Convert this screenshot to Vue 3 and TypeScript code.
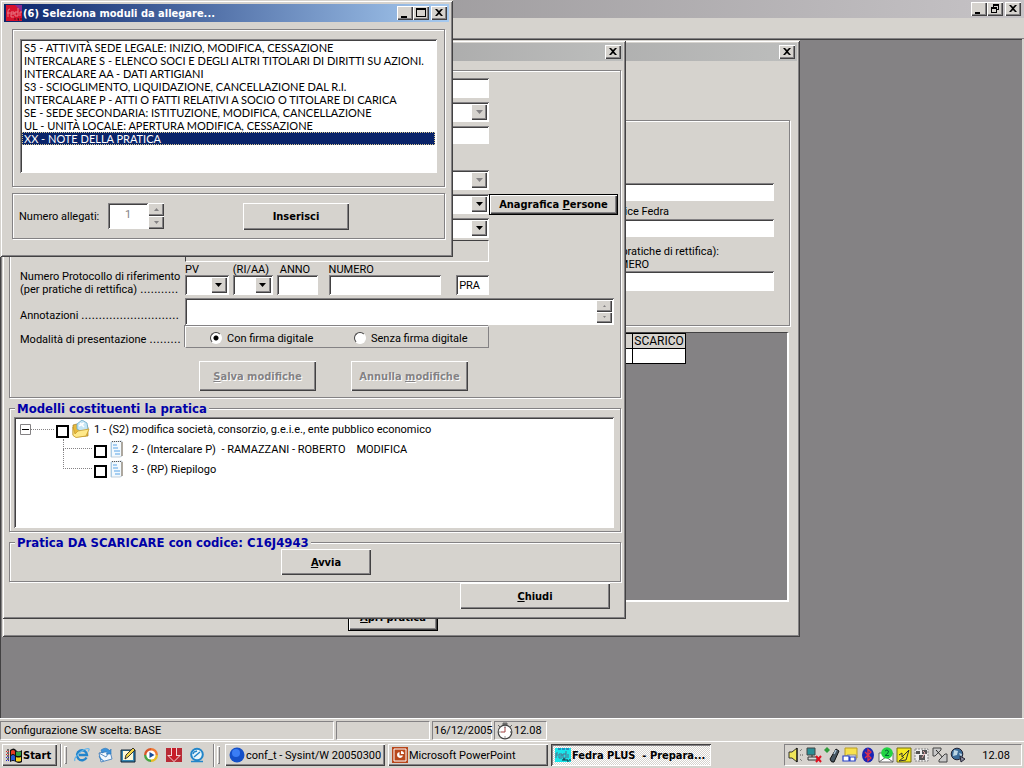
<script setup lang="ts">
import { ref } from 'vue'

interface TreeNode {
  id: number
  text: string
  child: boolean
}

const modules: string[] = [
  'S5 - ATTIVITÀ SEDE LEGALE: INIZIO, MODIFICA, CESSAZIONE',
  'INTERCALARE S - ELENCO SOCI E DEGLI ALTRI TITOLARI DI DIRITTI SU AZIONI.',
  'INTERCALARE AA - DATI ARTIGIANI',
  'S3 - SCIOGLIMENTO, LIQUIDAZIONE, CANCELLAZIONE DAL R.I.',
  'INTERCALARE P - ATTI O FATTI RELATIVI A SOCIO O TITOLARE DI CARICA',
  'SE - SEDE SECONDARIA: ISTITUZIONE, MODIFICA, CANCELLAZIONE',
  'UL - UNITÀ LOCALE: APERTURA MODIFICA, CESSAZIONE',
  'XX - NOTE DELLA PRATICA',
]
const selected = ref<string>(modules[7])
const count = ref<string>('1')
const protocolCode = ref<string>('PRA')
const signature = ref<string>('con')

const nodes: TreeNode[] = [
  { id: 1, text: '1 - (S2) modifica società, consorzio, g.e.i.e., ente pubblico economico', child: false },
  { id: 2, text: '2 - (Intercalare P)  - RAMAZZANI - ROBERTO    MODIFICA', child: true },
  { id: 3, text: '3 - (RP) Riepilogo', child: true },
]
</script>

<template>
  <div class="screen">
    <header class="app-title">
      <button class="cap" aria-label="Riduci a icona"><svg viewBox="0 0 10 10"><path d="M1 8h5v2H1z" /></svg></button>
      <button class="cap" aria-label="Ripristina"><svg viewBox="0 0 10 10"><path d="M3 0h6v6H7V5h1V2H4v1H3zM1 3h6v6H1zM2 5v3h4V5z" fill-rule="evenodd" /></svg></button>
      <button class="cap close" aria-label="Chiudi applicazione"><svg viewBox="0 0 10 10"><path d="M1 1h2l2 2 2-2h2L6 4.500 9 8H7L5 6 3 8H1l3-3.500z" /></svg></button>
    </header>
    <div class="menu-strip"></div>

    <main class="mdi">
      <section class="window back" aria-label="Pratiche">
        <div class="bar inactive">
          <button class="cap close" aria-label="Chiudi pratiche"><svg viewBox="0 0 10 10"><path d="M1 1h2l2 2 2-2h2L6 4.500 9 8H7L5 6 3 8H1l3-3.500z" /></svg></button>
        </div>
        <div class="etched back-form">
          <input class="field" type="text" aria-label="Denominazione" />
          <label class="l-code" for="fedra">Codice Fedra</label>
          <input id="fedra" class="field" type="text" />
          <span class="l-ret">(per pratiche di rettifica):</span>
          <label class="l-num" for="numero2">NUMERO</label>
          <input id="numero2" class="field tall" type="text" />
        </div>
        <div class="grid-panel">
          <table>
            <thead><tr><th></th><th class="last">SCARICO</th></tr></thead>
            <tbody><tr><td></td><td></td></tr></tbody>
          </table>
        </div>
        <button class="btn default open"><span><u>A</u>pri pratica</span></button>
      </section>

      <section class="window front" aria-label="Dettaglio pratica">
        <div class="bar inactive">
          <button class="cap close" aria-label="Chiudi dettaglio"><svg viewBox="0 0 10 10"><path d="M1 1h2l2 2 2-2h2L6 4.500 9 8H7L5 6 3 8H1l3-3.500z" /></svg></button>
        </div>

        <div class="etched form">
          <input class="field c2" type="text" aria-label="Campo 1" />
          <span class="combo c2"><select disabled aria-label="Elenco 1"></select><i class="drop off"><svg viewBox="0 0 7 4"><path d="M0 0h7L3.500 4z" /></svg></i></span>
          <input class="field short c2" type="text" aria-label="Campo 2" />
          <span class="c2"></span>
          <span class="combo c2"><select disabled aria-label="Elenco 2"></select><i class="drop off"><svg viewBox="0 0 7 4"><path d="M0 0h7L3.500 4z" /></svg></i></span>
          <div class="c2 with-button">
            <span class="combo"><select aria-label="Persona"></select><i class="drop"><svg viewBox="0 0 7 4"><path d="M0 0h7L3.500 4z" /></svg></i></span>
            <button class="btn default people"><span>Anagrafica <u>P</u>ersone</span></button>
          </div>
          <span class="combo c2"><select aria-label="Elenco 3"></select><i class="drop"><svg viewBox="0 0 7 4"><path d="M0 0h7L3.500 4z" /></svg></i></span>
          <div class="panel c2"></div>

          <div class="label two">
            <span>Numero Protocollo di riferimento</span>
            <span>(per pratiche di rettifica) <span class="leader">...........</span></span>
          </div>
          <div class="protocol">
            <div class="pv"><label for="pv">PV</label><span class="combo"><select id="pv"></select><i class="drop"><svg viewBox="0 0 7 4"><path d="M0 0h7L3.500 4z" /></svg></i></span></div>
            <div class="ri"><label for="ri">(RI/AA)</label><span class="combo"><select id="ri"></select><i class="drop"><svg viewBox="0 0 7 4"><path d="M0 0h7L3.500 4z" /></svg></i></span></div>
            <div class="anno"><label for="anno">ANNO</label><input id="anno" class="field" type="text" /></div>
            <div class="num"><label for="num">NUMERO</label><input id="num" class="field" type="text" /></div>
            <div class="pra"><input v-model="protocolCode" class="field" type="text" aria-label="Tipo" /></div>
          </div>

          <label class="label notes-label" for="notes">Annotazioni <span class="leader">............................</span></label>
          <div class="notes">
            <textarea id="notes"></textarea>
            <span class="spin"><button disabled aria-label="Su"><svg viewBox="0 0 3 2"><path d="M0 2h3L1.500 0z" /></svg></button><button disabled aria-label="Giù"><svg viewBox="0 0 3 2"><path d="M0 0h3L1.500 2z" /></svg></button></span>
          </div>

          <span class="label mode-label">Modalità di presentazione <span class="leader">.........</span></span>
          <div class="mode">
            <label><input v-model="signature" type="radio" value="con" name="firma" />Con firma digitale</label>
            <label><input v-model="signature" type="radio" value="senza" name="firma" />Senza firma digitale</label>
          </div>

          <div class="actions">
            <button class="btn" disabled><span><u>S</u>alva modifiche</span></button>
            <button class="btn" disabled><span>Annulla <u>m</u>odifiche</span></button>
          </div>
        </div>

        <section class="etched models">
          <h2>Modelli costituenti la pratica</h2>
          <ul class="tree">
            <li v-for="n in nodes" :key="n.id" :class="{ child: n.child }">
              <svg v-if="!n.child" class="minus" viewBox="0 0 11 11"><path d="M.5.5h10v10H.5z" fill="#fff" stroke="#848284" /><path d="M2 5h7v1H2z" /></svg>
              <span class="dots"></span>
              <input :id="'n' + n.id" type="checkbox" />
              <svg v-if="!n.child" class="icon" viewBox="0 0 18 18">
                <path d="M1 5l4-1 2 2 8-1 1 3v8L4 17l-3-2z" fill="#e8b93a" stroke="#a5802a" stroke-width=".7" />
                <path d="M5 4l5-4 5 3 1 6-6 3-5-3z" fill="#c5e6f5" stroke="#68a8c8" stroke-width=".8" />
                <path d="M8 3l4 4M7 6l5-3" stroke="#fff" stroke-width="1.500" />
                <path d="M1 7l2 7 3-3 11-2-3 7-10 1.500-3-2z" fill="#ffe98a" stroke="#c99d2c" stroke-width=".8" />
              </svg>
              <svg v-else class="icon page" viewBox="0 0 18 18">
                <path d="M3 2l11-1v15l-2 1H3z" fill="#f2f9fe" stroke="#b4c4d0" stroke-width=".8" />
                <path d="M3 17V2l1 0v15z" fill="#a9cbe4" />
                <path d="M4 1.500h9" stroke="#555" stroke-dasharray="1 1" />
                <path d="M5 5h4M5 8h5M6 11h6M7 14h5" stroke="#8cc0ee" stroke-width="1.500" />
                <path d="M14 2v14" stroke="#7c6a52" />
              </svg>
              <label :for="'n' + n.id">{{ n.text }}</label>
            </li>
          </ul>
        </section>

        <section class="etched unload">
          <h2>Pratica DA SCARICARE con codice: C16J4943</h2>
          <button class="btn start-btn"><span><u>A</u>vvia</span></button>
        </section>
        <button class="btn close-btn"><span><u>C</u>hiudi</span></button>
      </section>
    </main>

    <footer class="status">
      <span class="cell s1">Configurazione SW scelta: BASE</span>
      <span class="cell s2"></span>
      <span class="cell s3">16/12/2005</span>
      <span class="cell s4">
        <svg viewBox="0 0 18 18"><path d="M7 1h4v2H7zM2 3l2 2M16 3l-2 2" fill="#777" stroke="#666" stroke-width="1" /><circle cx="9" cy="10" r="6.800" fill="#fff" stroke="#444" stroke-width="1.200" /><path d="M9 5v5H5" fill="none" stroke="#a04040" /><path d="M9 4.500v1M9 14.500v1M14 10h1M3.500 10h1" stroke="#333" /></svg>12.08
      </span>
    </footer>

    <nav class="taskbar" aria-label="Barra delle applicazioni">
      <button class="start">
        <svg viewBox="0 0 17 17"><path d="M0 4.500h4M0 7.500h4" stroke="#d22" stroke-dasharray="1 1" /><path d="M0 10.500h4M0 13.500h4" stroke="#22c" stroke-dasharray="1 1" /><path d="M1 3h2M1 6h2M1 9h2M1 12h2" stroke="#000" /><path d="M4 3q4-3 6 0t6 0v12q-3 2-6 0t-6 0z" fill="#111" /><path d="M5 4q2-2 4 0v4q-2-2-4 0z" fill="#e33b23" /><path d="M10 4.500q2 1 5 0v4q-3 1-5 0z" fill="#2fa043" /><path d="M5 9q2-2 4 0v5q-2-2-4 0z" fill="#2558d4" /><path d="M10 10q2 1 5 0v4q-3 1-5 0z" fill="#f5d325" /></svg>
        Start
      </button>
      <span class="sep"></span><span class="grip"></span>
      <div class="quick">
        <a href="#ie" aria-label="Internet Explorer"><svg viewBox="0 0 16 16"><path d="M12.500 10.500A5 5 0 1 1 13 8H5" fill="none" stroke="#2385cc" stroke-width="2.400" /><path d="M1 14C-1 11 8 2 14 1.500c2 0 1 2 0 3" fill="none" stroke="#63b5ea" stroke-width="1.200" /></svg></a>
        <a href="#mail" aria-label="Outlook Express"><svg viewBox="0 0 16 16"><path d="M2 6l11-2 2 8-11 3z" fill="#f2f8fd" stroke="#5a8cc0" /><path d="M2 6l7 4 4-6" fill="none" stroke="#5a8cc0" /><path d="M4 3q5-4 9 1l1-2v5H9l2-1Q8 3 5 6zM2 9q1 4 5 5" fill="#3b92db" stroke="#2774ba" stroke-width=".6" /></svg></a>
        <a href="#desktop" aria-label="Mostra desktop"><svg viewBox="0 0 16 16"><path d="M1 3h14v12H1z" fill="#3888b5" stroke="#123" /><path d="M3 4h10v9H3z" fill="#fff8d8" /><path d="M5 12l1-4 7-7 2 2-7 7z" fill="#f1d548" stroke="#222" stroke-width=".9" /></svg></a>
        <a href="#media" aria-label="Media Player"><svg viewBox="0 0 16 16"><path d="M8 1a7 7 0 0 1 7 7H8z" fill="#ef7830" /><path d="M15 8a7 7 0 0 1-7 7V8z" fill="#e7bd25" /><path d="M8 15a7 7 0 0 1-7-7h7z" fill="#49a541" /><path d="M1 8a7 7 0 0 1 7-7v7z" fill="#d85729" /><circle cx="8" cy="8" r="4.600" fill="#fff" /><path d="M6.500 5l5 3-5 3z" fill="#174d9c" /></svg></a>
        <a href="#download" aria-label="Download"><svg viewBox="0 0 16 16"><path d="M0 1h16v14H0z" fill="#b92a35" /><path d="M5 1h6v7h4l-7 7-7-7h4z" fill="#f3d8d8" /><path d="M6 1h4v8h3l-5 5-5-5h3z" fill="#c71c28" /></svg></a>
        <a href="#meter" aria-label="Monitor"><svg viewBox="0 0 16 16"><circle cx="8" cy="7.500" r="5.800" fill="#e8f6fb" stroke="#2285c9" stroke-width="2" /><path d="M5 10l6-5M4 7l1-2 3-1" stroke="#2285c9" stroke-width="1.500" fill="none" /><path d="M2 14.500h12" stroke="#2285c9" stroke-width="1.500" /></svg></a>
      </div>
      <span class="sep"></span><span class="grip"></span>
      <div class="tasks">
        <button class="task"><svg viewBox="0 0 16 16"><circle cx="8" cy="8" r="7.500" fill="#1550c8" /><circle cx="7" cy="6" r="4" fill="#3a7df5" /></svg>conf_t - Sysint/W 20050300</button>
        <button class="task"><svg viewBox="0 0 16 16"><path d="M0 0h16v16H0z" fill="#b8471c" /><path d="M2 2h12v12H2z" fill="none" stroke="#fff" /><path d="M7.500 5a3 3 0 1 0 3.500 3.500H7.500z" fill="#fff" /><path d="M9 4a3 3 0 0 1 3 3H9z" fill="#fff" /></svg>Microsoft PowerPoint</button>
        <button class="task active"><svg viewBox="0 0 16 16"><path d="M0 1h16v14H0z" fill="#19e6ea" /><path d="M3 2h12" stroke="#223fa0" stroke-dasharray="3 1" /><path d="M1 11V6h2M1 8h2M5 9h2V7H4v4h3M11 4v7H8V7h3M13 7v4" fill="none" stroke="#52718c" /><path d="M8 14v-2h2v2M12 12v2h2M15 12v2" fill="none" stroke="#123" /></svg>Fedra PLUS&nbsp; - Prepara...</button>
      </div>
      <div class="tray">
        <svg viewBox="0 0 16 16"><path d="M1 5h3l5-4v14L4 11H1z" fill="#f0e65a" stroke="#222" stroke-width=".9" /><path d="M9 1v14" stroke="#000" /><path d="M12 4l2-2M12 8h3M12 12l2 2" stroke="#555" stroke-dasharray="1 1" /></svg>
        <svg viewBox="0 0 16 16"><path d="M1 1h8v7H1z" fill="#2a8f96" stroke="#444" /><path d="M2 10h9v3H2z" fill="#ddd" stroke="#333" /><path d="M6 8v2" stroke="#333" /><path d="M10 9l5 6M15 9l-5 6" stroke="#e01020" stroke-width="2" /></svg>
        <svg viewBox="0 0 16 16"><path d="M6 12l6-10 3 2-5 11q-3 1-4-3z" fill="#465560" stroke="#111" /><path d="M10 7l2-4" stroke="#abc4d8" stroke-width="1.500" /><path d="M3 0l3 3-3 3-3-3z" fill="#2f9c3a" /></svg>
        <svg viewBox="0 0 16 16"><path d="M3 1h12v10H3z" fill="#f7e14c" stroke="#b79c22" /><path d="M5 8h9v5H5z" fill="#eee" stroke="#888" /><path d="M1 9h6v5H1zM8 10h5v4H8z" fill="#fff" stroke="#2741c7" stroke-width="1.200" /></svg>
        <svg viewBox="0 0 16 16"><ellipse cx="8" cy="8" rx="6" ry="7.500" fill="#1a25b5" /><path d="M5 5l6 6-3 2.500v-11L11 5l-6 6" fill="none" stroke="#e0304a" stroke-width="1.300" /></svg>
        <svg viewBox="0 0 16 16"><path d="M1 6h14v9H1z" fill="#fff" stroke="#666" /><path d="M1 15l7-5 7 5" fill="none" stroke="#666" /><circle cx="9" cy="6" r="5.800" fill="#23d343" /><path d="M7 4q2-2 3.500 0Q11 6 7 8.500h4" fill="none" stroke="#063" /></svg>
        <svg viewBox="0 0 16 16"><path d="M1 1h14v14H1z" fill="#f4e81f" stroke="#77700e" /><path d="M3 8l3-2v4l7-7-3 10-7 1 5-4" fill="none" stroke="#333" /></svg>
        <svg viewBox="0 0 16 16"><path d="M1 2h13v12H1z" fill="#eee" stroke="#888" stroke-dasharray="2 1" /><path d="M2 4h4v3H2zM8 3h5v4H8zM5 8h6v5H5z" fill="#555" /><path d="M9 4l2 2-3 5" stroke="#e3a7a7" fill="none" /></svg>
        <svg viewBox="0 0 16 16"><path d="M1 1h8v2L3 9H1z" fill="#c8c8c8" stroke="#444" /><path d="M4 3l9 10" stroke="#222" /><path d="M15 7v8H7v-2l6-6z" fill="#c8c8c8" stroke="#444" /></svg>
        <svg viewBox="0 0 16 16"><circle cx="7" cy="7" r="5.800" fill="#3b6b98" stroke="#223" /><path d="M4 3l4 1-1 4-4 1zM9 6l3 1-1 4" fill="#bcd6e5" /><path d="M10 9l5 3-4 3z" fill="#889" stroke="#223" /></svg>
        <time>12.08</time>
      </div>
    </nav>

    <section class="window dialog" aria-label="Seleziona moduli da allegare">
      <div class="bar active">
        <svg class="logo" viewBox="0 0 16 16"><path d="M0 0h16v16H0z" fill="#d6112c" /><path d="M9 0h7v7z" fill="#8a2b90" /><path d="M2 12V6q0-2 2-2M1 8h3M5 9h3V7H5v5h3M12 3v8H9V7h3M14 11V7h2" fill="none" stroke="#e87a86" /><path d="M9 15v-2M12 13v2h1M15 13v2" stroke="#5d0a1c" /></svg>
        <h1>(6) Seleziona moduli da allegare...</h1>
        <button class="cap" aria-label="Riduci"><svg viewBox="0 0 10 10"><path d="M1 8h6v2H1z" /></svg></button>
        <button class="cap" aria-label="Ingrandisci"><svg viewBox="0 0 10 10"><path d="M0 0h10v9H0zM1 2v6h8V2z" fill-rule="evenodd" /></svg></button>
        <button class="cap close" aria-label="Chiudi"><svg viewBox="0 0 10 10"><path d="M1 1h2l2 2 2-2h2L6 4.500 9 8H7L5 6 3 8H1l3-3.500z" /></svg></button>
      </div>
      <div class="etched list-box">
        <select v-model="selected" size="10" aria-label="Moduli">
          <option v-for="m in modules" :key="m" :value="m">{{ m }}</option>
        </select>
      </div>
      <div class="etched insert-box">
        <label for="count">Numero allegati:</label>
        <span class="counter">
          <input id="count" v-model="count" type="text" disabled />
          <span class="spin big"><button disabled aria-label="Aumenta"><svg viewBox="0 0 5 3"><path d="M0 3h5L2.500 0z" /></svg></button><button disabled aria-label="Diminuisci"><svg viewBox="0 0 5 3"><path d="M0 0h5L2.500 3z" /></svg></button></span>
        </span>
        <button class="btn insert"><span>Inserisci</span></button>
      </div>
    </section>
  </div>
</template>

<style>
html, body { margin: 0; overflow: hidden; }
</style>

<style scoped>
.screen {
  --face: #d6d3ce;
  --shade: #848284;
  --dark: #424142;
  --ui: Roboto, "DejaVu Sans Condensed", sans-serif;
  --strong: "DejaVu Sans Condensed", "DejaVu Sans", sans-serif;
  position: relative;
  display: flex;
  flex-direction: column;
  height: 100vh;
  background: var(--face);
  color: #000;
  font: 11px/13px var(--ui);
}
.screen *, .screen *::before { box-sizing: border-box; }
button, input, select, textarea { font: inherit; color: inherit; margin: 0; border-radius: 0; }
h1, h2 { margin: 0; font-size: 11px; font-family: var(--strong); }

/* bevels */
.btn, .cap, .drop, .spin button, .start, .task {
  border: 0;
  background: var(--face);
  box-shadow: inset 1px 1px #fff, inset -1px -1px var(--dark), inset -2px -2px var(--shade);
}
.etched { border: 1px solid var(--shade); box-shadow: 1px 1px #fff, inset 1px 1px #fff; }
.field, .combo, .notes, .tree, .list-box select, .counter input {
  border: 0;
  background: #fff;
  box-shadow: inset 1px 1px var(--shade), inset -1px -1px #fff, inset 2px 2px var(--dark);
}
.field { display: block; width: 100%; height: 20px; padding: 0 3px; outline: 0; }
.combo { display: flex; height: 20px; padding: 2px; }
.combo select { flex: 1; min-width: 0; border: 0; appearance: none; background: #fff; outline: 0; }
.drop { display: flex; align-items: center; justify-content: center; width: 16px; }
.drop svg { width: 7px; height: 4px; }
.off svg, .spin svg { fill: var(--shade); }
.btn { display: flex; align-items: center; justify-content: center; flex: none; padding: 0; font-weight: bold; font-family: var(--strong); }
.btn:disabled { color: var(--shade); text-shadow: 1px 1px #fff; }
.default { border: 1px solid #000; }
.cap { display: flex; align-items: center; justify-content: center; width: 16px; height: 14px; padding: 0 1px 1px 0; }
.cap svg { width: 10px; height: 10px; }
.cap.close { margin-left: 2px; }
.spin { display: flex; flex-direction: column; width: 16px; }
.spin button { flex: 1; display: flex; align-items: center; justify-content: center; padding: 0; min-height: 0; }
.spin svg { width: 3px; height: 2px; }
.big svg { width: 5px; height: 3px; }

/* application frame */
.app-title {
  display: flex;
  align-items: center;
  justify-content: flex-end;
  height: 18px;
  padding-right: 3px;
  background: linear-gradient(90deg, #848284, #c6c3c6);
}
.menu-strip { height: 21px; border-bottom: 1px solid var(--shade); }
.mdi {
  position: relative;
  flex: 1;
  overflow: hidden;
  margin-right: 2px;
  border-left: 1px solid var(--dark);
  border-top: 1px solid var(--dark);
  background: var(--shade);
}
.window {
  position: absolute;
  display: flex;
  flex-direction: column;
  padding: 3px;
  background: var(--face);
  box-shadow: inset 1px 1px var(--face), inset -1px -1px var(--dark), inset 2px 2px #fff, inset -2px -2px var(--shade);
}
.bar { display: flex; align-items: center; height: 18px; padding-right: 2px; }
.inactive { justify-content: flex-end; background: linear-gradient(90deg, #848284, #bdbebd); }

/* list of practices */
.back { left: 1px; top: 0; width: 798px; padding-bottom: 6px; }
.back-form {
  display: flex;
  flex-direction: column;
  margin: 59px 7px 0 5px;
  padding: 62px 15px 34px 440px;
}
.back-form .field { height: 18px; }
.back-form .tall { height: 20px; }
.back-form label, .back-form span { align-self: flex-end; }
.l-code { padding-right: 105px; margin: 4px 0 1px; }
.l-ret { padding-right: 55px; margin-top: 8px; }
.l-num { padding-right: 125px; }
.grid-panel {
  height: 270px;
  margin: 6px 8px 2px 5px;
  border: 1px solid var(--dark);
  border-right: 2px solid #fff;
  border-bottom: 2px solid #fff;
  background: var(--shade);
}
.grid-panel table { width: 675px; border-collapse: collapse; background: #fff; }
.grid-panel th { height: 15px; padding: 0; border: 1px solid #000; background: var(--face); font-weight: normal; font-size: 12px; }
.grid-panel td { height: 15px; padding: 0; border: 1px solid #000; border-left-color: #c0c0c0; }
.grid-panel .last { width: 53px; }
.open { width: 90px; height: 27px; margin-left: 343px; }

/* practice detail */
.front { left: 1px; top: 0; width: 624px; padding-bottom: 10px; }
.form {
  display: grid;
  grid-template-columns: 165px 304px 1fr;
  grid-template-rows: 24px 24px 24px 20px 24px 24px 22px 22px 36px 28px 35px 36px;
  align-items: start;
  margin: 9px 2px 0 4px;
  padding: 7px 6px 0 10px;
}
.c2 { grid-column: 2; }
.short { height: 18px; }
.with-button { grid-column: 2 / 4; display: flex; }
.with-button .combo { flex: none; width: 304px; }
.people { width: 129px; height: 21px; }
.panel { height: 22px; border: 1px solid #fff; border-top-color: var(--dark); border-left-color: var(--dark); }
.label { grid-column: 1; white-space: nowrap; }
.leader { font-family: "DejaVu Sans", sans-serif; line-height: 1; }
.two { display: flex; flex-direction: column; padding-top: 8px; }
.protocol { grid-column: 2; display: flex; align-items: flex-end; height: 33px; }
.protocol label { display: block; height: 12px; }
.pv { width: 44px; margin-right: 4px; }
.ri { width: 40px; margin-right: 4px; }
.anno { width: 41px; margin-right: 11px; }
.num { width: 113px; margin-right: 15px; }
.pra { width: 33px; }
.anno label { padding-left: 3px; }
.notes-label { padding-top: 11px; }
.notes { grid-column: 2 / 4; display: flex; height: 27px; padding: 2px; }
.notes textarea { flex: 1; min-width: 0; padding: 0 2px; border: 0; outline: 0; resize: none; background: transparent; }
.mode-label { padding-top: 7px; }
.mode {
  grid-column: 2;
  display: grid;
  grid-template-columns: 144px 1fr;
  align-items: center;
  height: 22px;
  padding: 2px 0 0 24px;
  border: 1px solid var(--shade);
  border-top-color: #fff;
  border-left-color: #fff;
  box-shadow: -1px -1px var(--shade);
}
.mode label { display: flex; align-items: center; gap: 5px; white-space: nowrap; }
.mode input { appearance: none; width: 12px; height: 12px; border: 1px solid var(--dark); border-right-color: #fff; border-bottom-color: #fff; border-radius: 50%; background: #fff; }
.mode input:checked { background: radial-gradient(circle, #000 2px, #fff 3px); }
.actions { grid-column: 1 / 4; display: flex; gap: 35px; padding-left: 179px; }
.actions .btn { width: 117px; height: 30px; }
.models, .unload { margin: 10px 2px 0 4px; }
.models h2, .unload h2 {
  width: max-content;
  margin: -8px 0 0 5px;
  padding: 0 2px;
  background: var(--face);
  color: #0000a8;
  font-size: 13px;
  line-height: 16px;
}
.tree { height: 111px; margin: 0 6px 3px 4px; padding: 2px 6px; list-style: none; }
.tree li { display: flex; align-items: center; height: 20px; white-space: pre; }
.minus { width: 11px; height: 11px; }
.dots { width: 23px; height: 1px; border-top: 1px dotted var(--shade); }
.tree input { appearance: none; width: 13px; height: 13px; margin: 4px 3px 0 2px; border: 2px solid #000; background: #fff; }
.tree .icon { width: 18px; height: 18px; margin-right: 4px; }
.tree .page { margin-left: -2px; margin-right: 6px; }
.tree .child { padding-left: 43px; }
.child .dots { width: 29px; height: 10px; margin-bottom: 10px; border-top: 0; border-left: 1px dotted var(--shade); border-bottom: 1px dotted var(--shade); }
.child + .child .dots { height: 20px; margin-bottom: 20px; }
.unload { padding-bottom: 6px; }
.start-btn { width: 90px; height: 26px; margin-left: 271px; margin-top: -2px; }
.close-btn { align-self: flex-end; width: 150px; height: 26px; margin: 1px 13px 0 0; }

/* status bar */
.status { display: flex; gap: 2px; height: 23px; padding-top: 2px; border-top: 1px solid #fff; }
.cell { display: flex; align-items: center; height: 19px; padding-left: 3px; border: 1px solid #fff; border-top-color: var(--shade); border-left-color: var(--shade); white-space: nowrap; }
.s1 { width: 334px; }
.s2 { width: 94px; }
.s3 { width: 60px; padding-left: 1px; }
.s4 { width: 53px; padding-left: 1px; }
.s4 svg { flex: none; width: 18px; height: 18px; }

/* taskbar */
.taskbar { display: flex; align-items: center; height: 27px; padding: 2px 2px 2px; border-top: 1px solid #fff; }
.start, .task { display: flex; align-items: center; height: 22px; }
.start { width: 55px; padding: 0 4px; font-weight: bold; font-family: var(--strong); }
.start svg { flex: none; width: 17px; height: 17px; }
.sep { width: 2px; height: 23px; margin-left: 3px; border-left: 1px solid var(--shade); border-right: 1px solid #fff; }
.grip { width: 3px; height: 18px; margin-left: 2px; box-shadow: inset 1px 1px #fff, inset -1px -1px var(--shade); }
.quick { display: flex; gap: 7px; margin: 0 5px 0 7px; }
.quick a { display: flex; }
.quick svg, .task svg, .tray svg, .logo { flex: none; width: 16px; height: 16px; }
.tasks { flex: 1; display: flex; gap: 3px; margin-left: 5px; }
.task { width: 160px; padding: 0 4px; gap: 1px; white-space: nowrap; overflow: hidden; }
.active.task {
  background: repeating-conic-gradient(#fff 0 25%, #d6d3ce 0 50%) 0 0 / 2px 2px;
  box-shadow: inset 1px 1px var(--dark), inset -1px -1px #fff, inset 2px 2px var(--shade);
  font-weight: bold;
  font-family: var(--strong);
}
.tray { display: flex; align-items: center; gap: 2px; height: 22px; padding: 0 11px 0 3px; border: 1px solid #fff; border-top-color: var(--shade); border-left-color: var(--shade); }
.tray time { margin-left: 14px; }

/* module picker */
.dialog { left: 0; top: 0; width: 453px; padding: 4px 4px 18px; }
.bar.active { background: linear-gradient(90deg, #0a246a, #a6caf0); color: #fff; }
.dialog .bar { padding-left: 2px; }
.bar h1 { flex: 1; padding-left: 1px; white-space: nowrap; }
.dialog .cap { color: #000; }
.list-box { margin: 7px 4px 0 8px; padding: 9px 7px 13px; }
.list-box select {
  display: block;
  width: 100%;
  height: 134px;
  padding: 2px;
  overflow: hidden;
  outline: 0;
  font-family: Lato, Roboto, sans-serif;
}
.list-box option { height: 13px; min-height: 13px; padding: 0 2px; line-height: 13px; color: #000; }
.list-box option:checked { background: #0a246a linear-gradient(#0a246a, #0a246a); color: #fff; outline: 1px dotted #d8c890; outline-offset: -1px; }
.insert-box { display: flex; align-items: center; height: 46px; margin: 6px 4px 0 8px; padding-left: 6px; }
.insert-box > label { width: 89px; white-space: nowrap; }
.counter { display: flex; height: 26px; }
.counter input { width: 40px; padding: 0 0 4px; color: var(--shade); text-align: center; }
.insert { width: 106px; height: 27px; margin-left: 79px; }
</style>
